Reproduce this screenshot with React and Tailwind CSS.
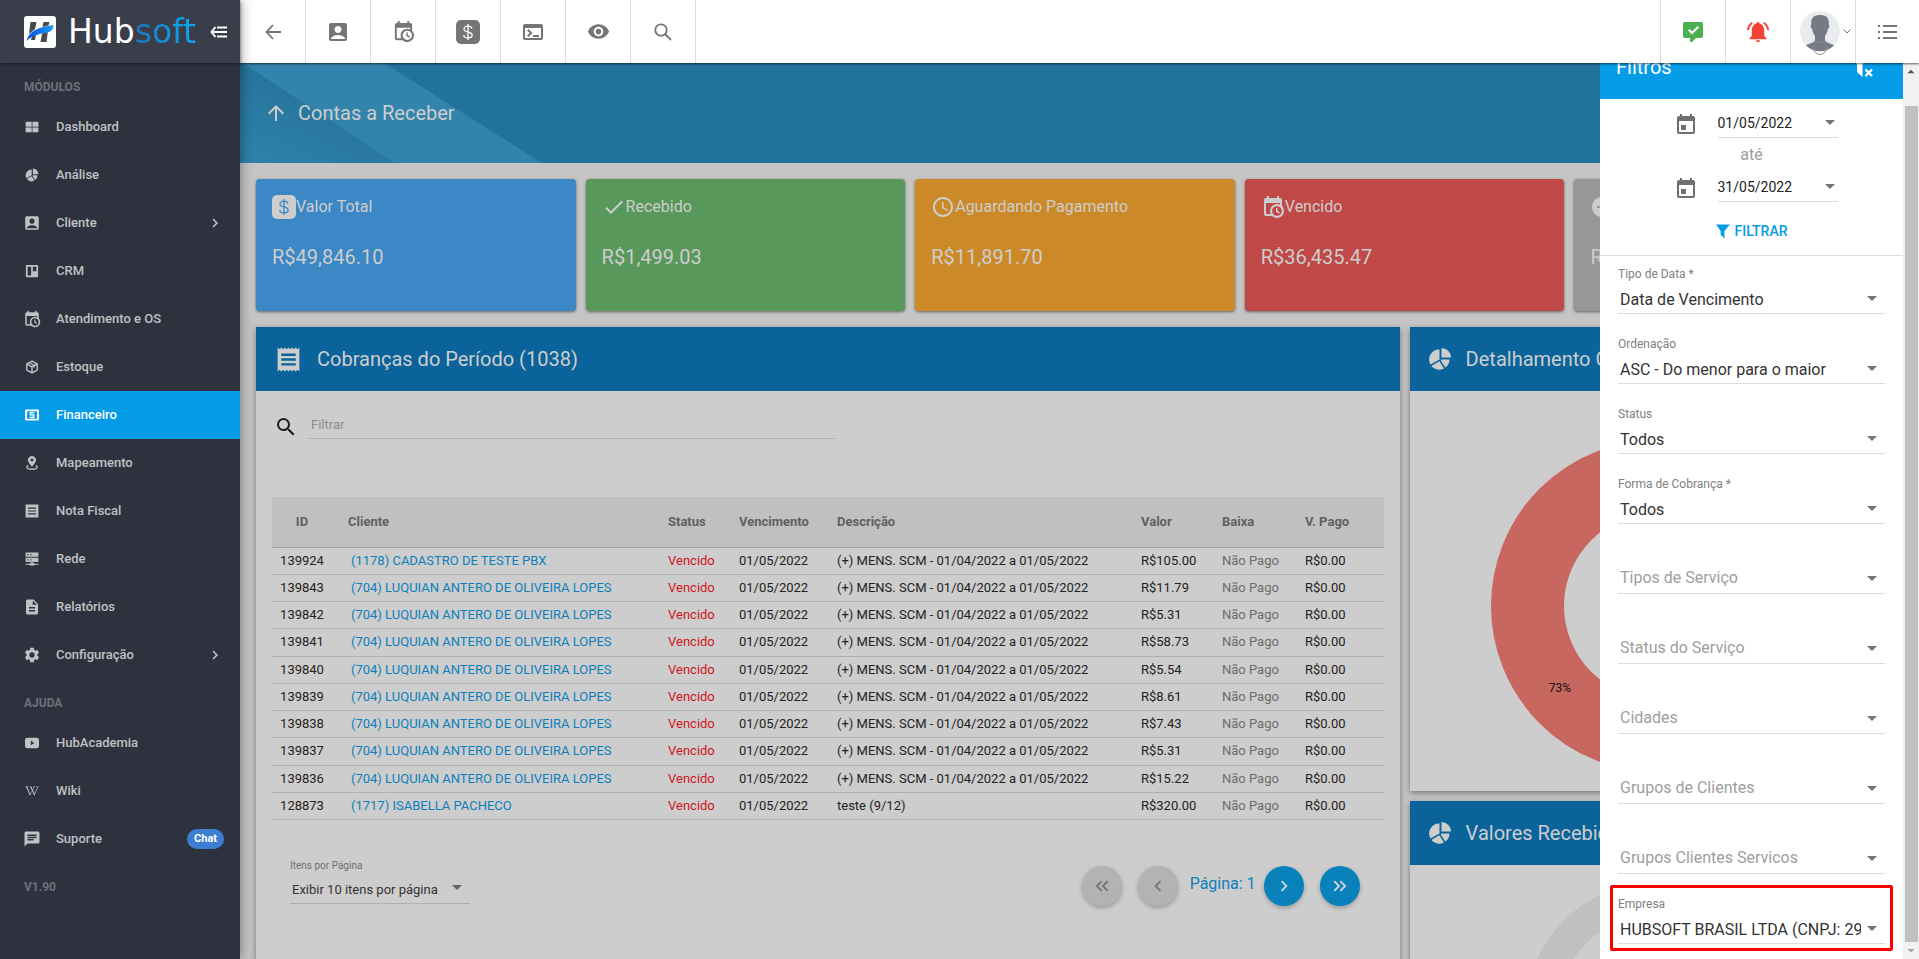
import { useState } from 'react'
import clsx from 'clsx'
import {
  MdAccountBox, MdArrowUpward, MdChat, MdCheck, MdChevronLeft, MdChevronRight, MdDescription,
  MdEvent, MdKeyboardDoubleArrowLeft, MdKeyboardDoubleArrowRight, MdReceipt,
  MdRemoveCircle, MdSchedule, MdSearch, MdSettings, MdTerminal, MdVisibility,
} from 'react-icons/md'
import { FaWikipediaW } from 'react-icons/fa'

function Svg({ size = 24, children, className, ...rest }) {
  return (
    <svg width={size} height={size} viewBox="0 0 24 24" fill="currentColor" className={clsx('shrink-0', className)} aria-hidden="true" {...rest}>
      {children}
    </svg>
  )
}

const CalendarClock = p => (
  <Svg {...p}><path d="M15,13H16.5V15.82L18.94,17.23L18.19,18.53L15,16.69V13M19,8H5V19H9.67C9.24,18.09 9,17.07 9,16A7,7 0 0,1 16,9C17.07,9 18.09,9.24 19,9.67V8M5,21C3.89,21 3,20.1 3,19V5C3,3.89 3.89,3 5,3H6V1H8V3H16V1H18V3H19A2,2 0 0,1 21,5V11.1C22.24,12.36 23,14.09 23,16A7,7 0 0,1 16,23C14.09,23 12.36,22.24 11.1,21H5M16,11.15A4.85,4.85 0 0,0 11.15,16C11.15,18.68 13.32,20.85 16,20.85A4.85,4.85 0 0,0 20.85,16C20.85,13.32 18.68,11.15 16,11.15Z" /></Svg>
)
const DollarBox = ({ ink, ...p }) => (
  <Svg {...p}>
    <rect width="24" height="24" rx="5" />
    <path d="M16 8.6C15.6 7 14 6.2 12 6.2c-2.2 0-4 1-4 2.8 0 1.900 1.800 2.500 4 3s4.200 1.200 4.200 3.100c0 1.900-1.900 2.900-4.200 2.900-2.300 0-4-1-4.400-2.800M12 4v16" fill="none" stroke={ink} strokeWidth="1.300" />
  </Svg>
)
const Pie = p => (
  <Svg {...p}>
    <path d="M13.500 1A9.500 9.500 0 0 1 23 10.500H13.500zM13.500 12.500H21.500A10 10 0 0 1 17.300 20.500L12.700 13.500zM16 21.400A10 10 0 0 1 3.300 19L11.400 14.300zM2.500 17.500A10 10 0 0 1 11.500 2.500V12.500z" />
  </Svg>
)
const Grid = p => <Svg {...p}><path d="M1 3h10.500v8.500H1zM12.700 3H23v8.500H12.700zM1 12.700h10.500V21H1zM12.700 12.700H23V21H12.700z" /></Svg>
const Board = p => <Svg {...p}><path fillRule="evenodd" d="M3 1.500h18A1.500 1.500 0 0 1 22.500 3v18a1.500 1.500 0 0 1-1.500 1.500H3A1.500 1.500 0 0 1 1.500 21V3A1.500 1.500 0 0 1 3 1.500zM4.500 4.500v15h6v-15zM13.500 4.500v8h6v-8z" /></Svg>
const Box = p => (
  <Svg {...p} fill="none" stroke="currentColor" strokeWidth="2.400" strokeLinejoin="round">
    <path d="M12 2l9 4.800v10.400L12 22l-9-4.800V6.800zM3.500 7l8.500 4.700L20.500 7M12 11.700V22M7.500 4.700l8.500 4.600v3.500" />
  </Svg>
)
const Cash = p => (
  <Svg {...p}>
    <path fillRule="evenodd" d="M2 2.500h20a2 2 0 0 1 2 2v15a2 2 0 0 1-2 2H2a2 2 0 0 1-2-2v-15a2 2 0 0 1 2-2zM3.500 5.500v13h17v-13z" />
    <path d="M8 7h3V6h2v1h3v2h-5.500v1.800H16V17h-3v1h-2v-1H8v-2.200h5.500V13H8z" />
  </Svg>
)
const Pin = p => (
  <Svg {...p}>
    <path fillRule="evenodd" d="M12 0c4 0 7 3 7 6.800C19 11 12 18.500 12 18.500S5 11 5 6.800C5 3 8 0 12 0zm0 4.300a2.500 2.500 0 1 0 0 5 2.500 2.500 0 0 0 0-5z" />
    <path d="M5.500 16C4 16.700 3.300 17.800 3.300 18.900 3.300 21.400 7.500 22.800 12 22.800s8.700-1.400 8.700-3.900c0-1.100-.7-2.200-2.200-2.900" fill="none" stroke="currentColor" strokeWidth="2.400" />
  </Svg>
)
const Note = p => <Svg {...p}><path fillRule="evenodd" d="M1 1h22v22H1zM5 6v2h14V6zm0 5v2h14v-2zm0 5v2h14v-2z" /></Svg>
const Server = p => (
  <Svg {...p}><path fillRule="evenodd" d="M1 1h22v7H1zM4 3.500v2h2v-2zm5 0v2h2v-2zM1 10h22v7H1zM4 12.500v2h2v-2zm5 0v2h2v-2zM11 17h2v2h3v1h7v2h-7v1H8v-1H1v-2h7v-1h3z" /></Svg>
)
const Play = p => <Svg {...p}><path fillRule="evenodd" d="M4 3h16a4 4 0 0 1 4 4v10a4 4 0 0 1-4 4H4a4 4 0 0 1-4-4V7a4 4 0 0 1 4-4zm6 5v8l6-4z" /></Svg>
const ArrowDown = ({ className }) => (
  <svg width="10" height="5" viewBox="0 0 10 5" fill="currentColor" className={className} aria-hidden="true"><path d="M0 0h10L5 5z" /></svg>
)

const MODULES = [
  { label: 'Dashboard', Icon: Grid },
  { label: 'Análise', Icon: Pie },
  { label: 'Cliente', Icon: MdAccountBox, big: true, more: true },
  { label: 'CRM', Icon: Board },
  { label: 'Atendimento e OS', Icon: CalendarClock, big: true },
  { label: 'Estoque', Icon: Box },
  { label: 'Financeiro', Icon: Cash, active: true },
  { label: 'Mapeamento', Icon: Pin },
  { label: 'Nota Fiscal', Icon: Note },
  { label: 'Rede', Icon: Server },
  { label: 'Relatórios', Icon: MdDescription, big: true },
  { label: 'Configuração', Icon: MdSettings, big: true, more: true },
]

const HELP = [
  { label: 'HubAcademia', Icon: Play },
  { label: 'Wiki', Icon: FaWikipediaW },
  { label: 'Suporte', Icon: MdChat, big: true, badge: 'Chat' },
]

const STATS = [
  { label: 'Valor Total', value: 'R$49,846.10', cls: 'bg-[#3c87c5]', icon: <DollarBox ink="#3c87c5" /> },
  { label: 'Recebido', value: 'R$1,499.03', cls: 'bg-[#58985b]', icon: <MdCheck size={24} /> },
  { label: 'Aguardando Pagamento', value: 'R$11,891.70', cls: 'bg-[#cb8a27]', icon: <MdSchedule size={24} /> },
  { label: 'Vencido', value: 'R$36,435.47', cls: 'bg-[#c04846]', icon: <CalendarClock /> },
  { label: 'Cancelado', value: 'R$0.00', cls: 'bg-[#979797]', icon: <MdRemoveCircle size={24} /> },
]

const LUQUIAN = '(704) LUQUIAN ANTERO DE OLIVEIRA LOPES'
const MENS = '(+) MENS. SCM - 01/04/2022 a 01/05/2022'
const ROWS = [
  ['139924', '(1178) CADASTRO DE TESTE PBX', MENS, 'R$105.00'],
  ['139843', LUQUIAN, MENS, 'R$11.79'],
  ['139842', LUQUIAN, MENS, 'R$5.31'],
  ['139841', LUQUIAN, MENS, 'R$58.73'],
  ['139840', LUQUIAN, MENS, 'R$5.54'],
  ['139839', LUQUIAN, MENS, 'R$8.61'],
  ['139838', LUQUIAN, MENS, 'R$7.43'],
  ['139837', LUQUIAN, MENS, 'R$5.31'],
  ['139836', LUQUIAN, MENS, 'R$15.22'],
  ['128873', '(1717) ISABELLA PACHECO', 'teste (9/12)', 'R$320.00'],
]

const FIELDS = [
  { id: 'tipo', label: 'Tipo de Data', required: true, value: 'Data de Vencimento' },
  { id: 'ordem', label: 'Ordenação', value: 'ASC - Do menor para o maior' },
  { id: 'status', label: 'Status', value: 'Todos' },
  { id: 'forma', label: 'Forma de Cobrança', required: true, value: 'Todos' },
  { id: 'tipos-servico', label: 'Tipos de Serviço' },
  { id: 'status-servico', label: 'Status do Serviço' },
  { id: 'cidades', label: 'Cidades' },
  { id: 'grupos', label: 'Grupos de Clientes' },
  { id: 'grupos-servicos', label: 'Grupos Clientes Servicos' },
  { id: 'empresa', label: 'Empresa', value: 'HUBSOFT BRASIL LTDA (CNPJ: 29', highlight: true },
]

function NavItem({ label, Icon, big, active, more, badge }) {
  return (
    <li>
      <a
        href="#"
        className={clsx(
          'flex h-12 items-center pl-6 pr-4 text-[13px] font-medium',
          active ? 'bg-[#049be7] text-white' : 'text-[#c0c1c5]'
        )}
      >
        <span className="flex w-4 justify-center"><Icon size={big ? 18 : 14} className="shrink-0" /></span>
        <span className="ml-4 flex-1">{label}</span>
        {more && <MdChevronRight size={18} />}
        {badge && <span className="rounded-full bg-[#3c7fd2] px-[7px] text-[11px] font-bold leading-5 text-white">{badge}</span>}
      </a>
    </li>
  )
}

function Sidebar() {
  return (
    <aside className="z-20 flex w-60 shrink-0 flex-col bg-[#2e323f] shadow-[0_0_12px_rgba(0,0,0,0.45)]">
      <div className="flex h-[63px] shrink-0 items-center bg-[#3a3e4a] pl-6 shadow-[0_1px_3px_rgba(0,0,0,0.5)]">
        <svg width="32" height="32" viewBox="0 0 32 32" aria-hidden="true">
          <defs>
            <linearGradient id="swoosh" x1="0" x2="1"><stop stopColor="#0a4fe0" /><stop offset="1" stopColor="#1aa0f5" /></linearGradient>
          </defs>
          <rect width="32" height="32" rx="3" fill="#fff" />
          <path d="M6.500 6h6L11 13l-6 5zM8 20l4-1.500L11 24H7zM19.500 6h6l-1 3.500-6 1.500zM18 17.500l6-3L22.500 26h-6z" fill="#4a4a4a" />
          <path d="M2.500 25C5 15 13 11.500 29.500 9c0 4-2 6.500-6 7.500-8 1.500-14 2-21 8.500z" fill="url(#swoosh)" />
        </svg>
        <span className="ml-3 w-[134px] font-['DejaVu_Sans'] text-[33px] leading-8 text-white">
          Hub<span className="bg-linear-to-r from-[#1a76c0] to-[#04aaf2] bg-clip-text text-transparent">soft</span>
        </span>
        <button type="button" aria-label="Recolher menu" className="ml-2 text-white">
          <svg width="17" height="12" viewBox="0 0 17 12" fill="none" stroke="currentColor" strokeWidth="2" aria-hidden="true">
            <path d="M7 1.500h10M1 6h16M7 10.500h10M5.500 1L1.500 6l4 5" />
          </svg>
        </button>
      </div>
      <nav>
        <h2 className="h-10 pl-6 pt-[14px] text-[12px] font-bold leading-5 text-[#6d707a]">MÓDULOS</h2>
        <ul>{MODULES.map(m => <NavItem key={m.label} {...m} />)}</ul>
        <h2 className="h-10 pl-6 pt-[14px] text-[12px] font-bold leading-5 text-[#6d707a]">AJUDA</h2>
        <ul>{HELP.map(m => <NavItem key={m.label} {...m} />)}</ul>
        <p className="h-10 pl-6 pt-[14px] text-[12px] font-bold leading-5 text-[#6d707a]">V1.90</p>
      </nav>
    </aside>
  )
}

function TopBar() {
  const left = 'flex h-full w-[65px] items-center justify-center border-r border-[#dcdcdc]'
  const right = 'flex h-full w-[65px] items-center justify-center border-l border-[#dcdcdc]'
  return (
    <header className="z-10 flex h-[63px] shrink-0 bg-white pl-px text-[#757575] shadow-[0_1px_2px_rgba(0,0,0,0.6)]">
      <button type="button" aria-label="Voltar" className={left}>
        <svg width="16" height="16" viewBox="0 0 16 16" fill="none" stroke="currentColor" strokeWidth="1.800" aria-hidden="true"><path d="M16 8H1.500M8 1L1.500 8 8 15" /></svg>
      </button>
      <button type="button" aria-label="Clientes" className={left}><MdAccountBox size={24} /></button>
      <button type="button" aria-label="Agenda" className={left}><CalendarClock size={23} /></button>
      <button type="button" aria-label="Financeiro" className={left}><DollarBox ink="#fff" /></button>
      <button type="button" aria-label="Console" className={left}><MdTerminal size={24} /></button>
      <button type="button" aria-label="Visualizar" className={left}><MdVisibility size={23} /></button>
      <button type="button" aria-label="Pesquisar" className={left}>
        <svg width="18" height="18" viewBox="0 0 18 18" fill="none" stroke="currentColor" strokeWidth="1.800" aria-hidden="true"><circle cx="7" cy="7" r="5.700" /><path d="M11 11l6 6" /></svg>
      </button>
      <div className="flex-1" />
      <button type="button" aria-label="Tarefas" className={clsx(right, 'text-[#4caf50]')}>
        <Svg><path fillRule="evenodd" d="M4 2h16a2 2 0 0 1 2 2v12a2 2 0 0 1-2 2h-5l-4 4H9v-4H4a2 2 0 0 1-2-2V4a2 2 0 0 1 2-2zm7 12.400l7-7L16.600 6 11 11.600 8.400 9 7 10.400z" /></Svg>
      </button>
      <button type="button" aria-label="Notificações" className={clsx(right, 'text-[#f44336]')}>
        <Svg>
          <path d="M12 2c-.9 0-1.500.6-1.500 1.500C7.600 4.200 5.800 6.700 5.800 10v6L3.500 18.300v.9h17v-.9L18.200 16v-6c0-3.300-1.800-5.800-4.700-6.500C13.500 2.600 12.900 2 12 2zM10 20.300h4a2 2 0 0 1-4 0z" />
          <path d="M6.200 2.700C3.600 4.600 2.100 7 2 10M17.800 2.700C20.400 4.600 21.900 7 22 10" fill="none" stroke="currentColor" strokeWidth="2" />
        </Svg>
      </button>
      <button type="button" aria-label="Perfil" className={clsx(right, 'gap-[3px] pl-1')}>
        <svg width="40" height="46" viewBox="0 0 40 46" aria-hidden="true" className="mt-1">
          <circle cx="20" cy="20" r="20" fill="#e9ebef" />
          <path d="M11.300 13C10.500 7 14 4 20 4s9.500 3 8.700 9c1 1 .8 4-.8 5-.5 3-1.400 5-2.900 7v4.500c2 3 6 3 9.200 4.800A20 20 0 0 1 5.800 34.300C9 32.500 13 32.500 15 29.500V25c-1.500-2-2.400-4-2.900-7-1.600-1-1.800-4-.8-5z" fill="#757b84" />
          <circle cx="20" cy="37" r="6.500" fill="none" stroke="#8b8b8b" />
        </svg>
        <svg width="8" height="5" viewBox="0 0 8 5" fill="none" stroke="currentColor" aria-hidden="true"><path d="M.5.500L4 4 7.500.500" /></svg>
      </button>
      <button type="button" aria-label="Opções" className="flex h-full w-16 items-center justify-center border-l border-[#dcdcdc]">
        <svg width="19" height="16" viewBox="0 0 19 16" fill="currentColor" aria-hidden="true"><path d="M0 1h2v2H0zM5 1h14v2H5zM0 7h2v2H0zM5 7h14v2H5zM0 13h2v2H0zM5 13h14v2H5z" /></svg>
      </button>
    </header>
  )
}

function PanelHeader({ icon, title }) {
  return (
    <div className="flex h-16 items-center gap-[14px] whitespace-nowrap bg-[#0a639a] pl-[18px] text-xl text-[#cdcdcd]">
      {icon}
      <h2>{title}</h2>
    </div>
  )
}

function Charges() {
  const [filter, setFilter] = useState('')
  const round = 'flex size-10 items-center justify-center rounded-full shadow-[0_2px_4px_rgba(0,0,0,0.25)]'
  return (
    <section className="min-w-0 flex-1 bg-[#cdcdcd] shadow-[0_2px_6px_rgba(0,0,0,0.4)]">
      <PanelHeader icon={<MdReceipt size={29} />} title="Cobranças do Período (1038)" />
      <div className="px-4 pt-5">
        <div className="flex h-7 items-end gap-[10px] pl-[2px]">
          <MdSearch size={24} className="text-[#1c1c1c]" />
          <input
            type="text"
            value={filter}
            onChange={e => setFilter(e.target.value)}
            placeholder="Filtrar"
            aria-label="Filtrar"
            className="h-7 w-[47.5%] border-b border-[#b0b0b0] bg-transparent pl-[3px] text-[13px] outline-none placeholder:text-[#8c8c8c]"
          />
        </div>

        <table className="mt-[58px] h-[323px] w-full table-fixed text-left text-[13px] text-[#222]">
          <colgroup>
            <col className="w-[60px]" />
            <col className="w-[320px]" />
            <col className="w-[71px]" />
            <col className="w-[98px]" />
            <col className="w-[304px]" />
            <col className="w-[81px]" />
            <col className="w-[83px]" />
            <col className="w-[95px]" />
          </colgroup>
          <thead>
            <tr className="h-[50px] border-b border-[#a4a4a4] bg-[#c0c0c0] text-[#616161]">
              <th className="text-center font-bold">ID</th>
              {['Cliente', 'Status', 'Vencimento', 'Descrição', 'Valor', 'Baixa', 'V. Pago'].map(h => (
                <th key={h} className="whitespace-nowrap pl-4 font-bold">{h}</th>
              ))}
            </tr>
          </thead>
          <tbody>
            {ROWS.map(([id, client, desc, value]) => (
              <tr key={id} className="whitespace-nowrap border-b border-[#b0b0b0] leading-5">
                <td className="text-center">{id}</td>
                <td className="pl-[19px]"><a href="#" className="text-[#0d80bb]">{client}</a></td>
                <td className="pl-4 text-[#d0141c]">Vencido</td>
                <td className="pl-4">01/05/2022</td>
                <td className="pl-4">{desc}</td>
                <td className="pl-4">{value}</td>
                <td className="pl-4 text-[#6c6c6c]">Não Pago</td>
                <td className="pl-4">R$0.00</td>
              </tr>
            ))}
          </tbody>
        </table>

        <div className="flex items-start justify-between pl-[18px] pr-6 pt-9">
          <div className="relative w-[180px]">
            <label htmlFor="per-page" className="block text-[10px] leading-5 text-[#6f6f6f]">Itens por Página</label>
            <select id="per-page" className="h-7 w-full appearance-none border-b border-[#b0b0b0] bg-transparent pl-[2px] text-[13px] text-[#333]">
              <option>Exibir 10 itens por página</option>
            </select>
            <ArrowDown className="pointer-events-none absolute right-2 top-[29px] text-[#666]" />
          </div>
          <div className="flex items-center pt-[10px]">
            <button type="button" aria-label="Primeira" disabled className={clsx(round, 'bg-[#b3b3b3] text-[#747474]')}><MdKeyboardDoubleArrowLeft size={22} /></button>
            <button type="button" aria-label="Anterior" disabled className={clsx(round, 'ml-4 bg-[#b3b3b3] text-[#747474]')}><MdChevronLeft size={22} /></button>
            <span className="-mt-1 ml-3 mr-2 text-base text-[#0d80bb]">Página: 1</span>
            <button type="button" aria-label="Próxima" className={clsx(round, 'bg-[#0981ba] text-[#d0d8dc]')}><MdChevronRight size={22} /></button>
            <button type="button" aria-label="Última" className={clsx(round, 'ml-4 bg-[#0981ba] text-[#d0d8dc]')}><MdKeyboardDoubleArrowRight size={22} /></button>
          </div>
        </div>
      </div>
    </section>
  )
}

function Charts() {
  return (
    <div className="flex w-[30%] shrink-0 flex-col gap-[10px]">
      <section className="h-[464px] shrink-0 bg-[#cdcdcd] shadow-[0_2px_6px_rgba(0,0,0,0.4)]">
        <PanelHeader icon={<Pie />} title="Detalhamento Cobranças" />
        <svg width="332" height="332" viewBox="0 0 332 332" className="mx-auto mt-[49px]">
          <circle cx="166" cy="166" r="129.500" fill="none" stroke="#c8675f" strokeWidth="73" />
          <text x="69" y="252" textAnchor="middle" fontSize="12" fontFamily="Roboto, sans-serif" fill="#111">73%</text>
        </svg>
      </section>
      <section className="h-[464px] shrink-0 bg-[#cdcdcd] shadow-[0_2px_6px_rgba(0,0,0,0.4)]">
        <PanelHeader icon={<Pie />} title="Valores Recebidos" />
        <svg width="264" height="264" viewBox="0 0 264 264" className="mx-auto mt-[17px]">
          <circle cx="132" cy="132" r="116" fill="none" stroke="#c0c0c0" strokeWidth="32" />
        </svg>
      </section>
    </div>
  )
}

function DateField({ id, label, value }) {
  return (
    <div className="flex h-8 items-center justify-center pl-2">
      <MdEvent size={24} className="mt-1 -scale-x-100 text-[#6f6f6f]" />
      <div className="relative ml-5 w-[120px]">
        <input id={id} aria-label={label} defaultValue={value} className="h-[30px] w-full border-b border-[#dcdcdc] text-sm text-[#212121] outline-none" />
        <ArrowDown className="pointer-events-none absolute right-[3px] top-3 text-[#757575]" />
      </div>
    </div>
  )
}

function FilterField({ id, label, required, value, highlight }) {
  return (
    <div className="relative">
      {value
        ? <label htmlFor={id} className="block h-4 text-xs leading-4 text-[#808080]">{label}{required && ' *'}</label>
        : <div className="h-4" />}
      <select
        id={id}
        aria-label={value ? undefined : label}
        className={clsx(
          'block h-8 w-full appearance-none border-b border-[#dcdcdc] bg-transparent pl-[2px] pr-6 text-base outline-none',
          value ? 'pt-1 text-[#333]' : 'text-[#9e9e9e]'
        )}
      >
        <option>{value ?? label}</option>
      </select>
      <ArrowDown className="pointer-events-none absolute right-2 top-[30px] text-[#757575]" />
      {highlight && <div className="pointer-events-none absolute -inset-x-2 -bottom-[7px] -top-[11px] rounded-xs border-3 border-[#fe0000]" />}
    </div>
  )
}

function Filters() {
  return (
    <aside className="absolute inset-y-0 right-0 flex w-[319px] overflow-hidden bg-white">
      <div className="min-w-0 flex-1">
        <div className="-mt-7 flex h-16 items-center justify-between bg-[#049be7] pl-4 pr-[30px] text-xl text-white">
          <h2>Filtros</h2>
          <button type="button" aria-label="Limpar filtros">
            <svg width="22" height="24" viewBox="0 0 22 24" fill="currentColor" aria-hidden="true">
              <path d="M0 1h18l-6.500 8.500V22L6 17V9.500z" />
              <path d="M14.500 14.500l6.500 6.500M21 14.500L14.500 21" stroke="currentColor" strokeWidth="2.400" />
            </svg>
          </button>
        </div>
        <form className="border-b border-[#dcdcdc] pb-[6px] pt-2" onSubmit={e => e.preventDefault()}>
          <DateField id="inicio" label="Data inicial" value="01/05/2022" />
          <p className="h-8 pt-1 text-center text-base text-[#9e9e9e]">até</p>
          <DateField id="fim" label="Data final" value="31/05/2022" />
          <button type="submit" className="mx-auto mt-[10px] flex h-9 items-center gap-[5px] text-sm font-medium text-[#049be7]">
            <svg width="14" height="16" viewBox="0 0 15 16" fill="currentColor" aria-hidden="true"><path d="M0 1h15L9 8v8l-4-4V8z" /></svg>
            FILTRAR
          </button>
        </form>
        <div className="flex flex-col gap-[22px] px-[18px] pt-[10px]">
          {FIELDS.map(f => <FilterField key={f.id} {...f} />)}
        </div>
      </div>
      <div className="flex w-4 flex-col items-center bg-[#f1f1f1] text-[#505050]">
        <ArrowDown className="my-[6px] rotate-180 scale-75" />
        <div className="mt-[26px] w-[13px] flex-1 bg-[#c1c1c1]" />
        <ArrowDown className="my-[6px] scale-75 text-[#a3a3a3]" />
      </div>
    </aside>
  )
}

export default function App() {
  return (
    <div className="flex h-screen overflow-hidden font-[Roboto,sans-serif]">
      <Sidebar />
      <div className="flex min-w-0 flex-1 flex-col">
        <TopBar />
        <div className="relative min-h-0 flex-1 overflow-hidden bg-[#c5c5c5]">
          <main>
            <div className="relative flex h-[100px] items-center bg-[#21739b] pl-6 text-xl text-[#cdcdcd]">
              <svg width="320" height="100" viewBox="0 0 320 100" className="absolute left-0 top-0" aria-hidden="true">
                <defs>
                  <linearGradient id="fold" x1="0" y1="1" x2=".45" y2=".35"><stop stopColor="#2f83ad" /><stop offset="1" stopColor="#27759d" /></linearGradient>
                </defs>
                <path d="M2 0h142l158 100H155z" fill="#3384ac" />
                <path d="M0 0h2l153 100H0z" fill="url(#fold)" />
              </svg>
              <a href="#" aria-label="Subir" className="relative"><MdArrowUpward size={24} /></a>
              <h1 className="relative ml-[10px]">Contas a Receber</h1>
            </div>
            <div className="flex gap-[10px] pb-4 pl-4 pr-[25px] pt-4">
              {STATS.map(s => (
                <div key={s.label} className={clsx('h-[132px] min-w-0 flex-1 rounded px-4 pt-4 text-[#cdcdcd] shadow-[0_1px_3px_rgba(0,0,0,0.5)]', s.cls)}>
                  <div className="flex h-6 items-center whitespace-nowrap text-base">{s.icon}{s.label}</div>
                  <p className="mt-6 text-xl leading-7">{s.value}</p>
                </div>
              ))}
            </div>
            <div className="flex gap-[10px] pl-4 pr-[15px]">
              <Charges />
              <Charts />
            </div>
          </main>
          <Filters />
        </div>
      </div>
    </div>
  )
}
